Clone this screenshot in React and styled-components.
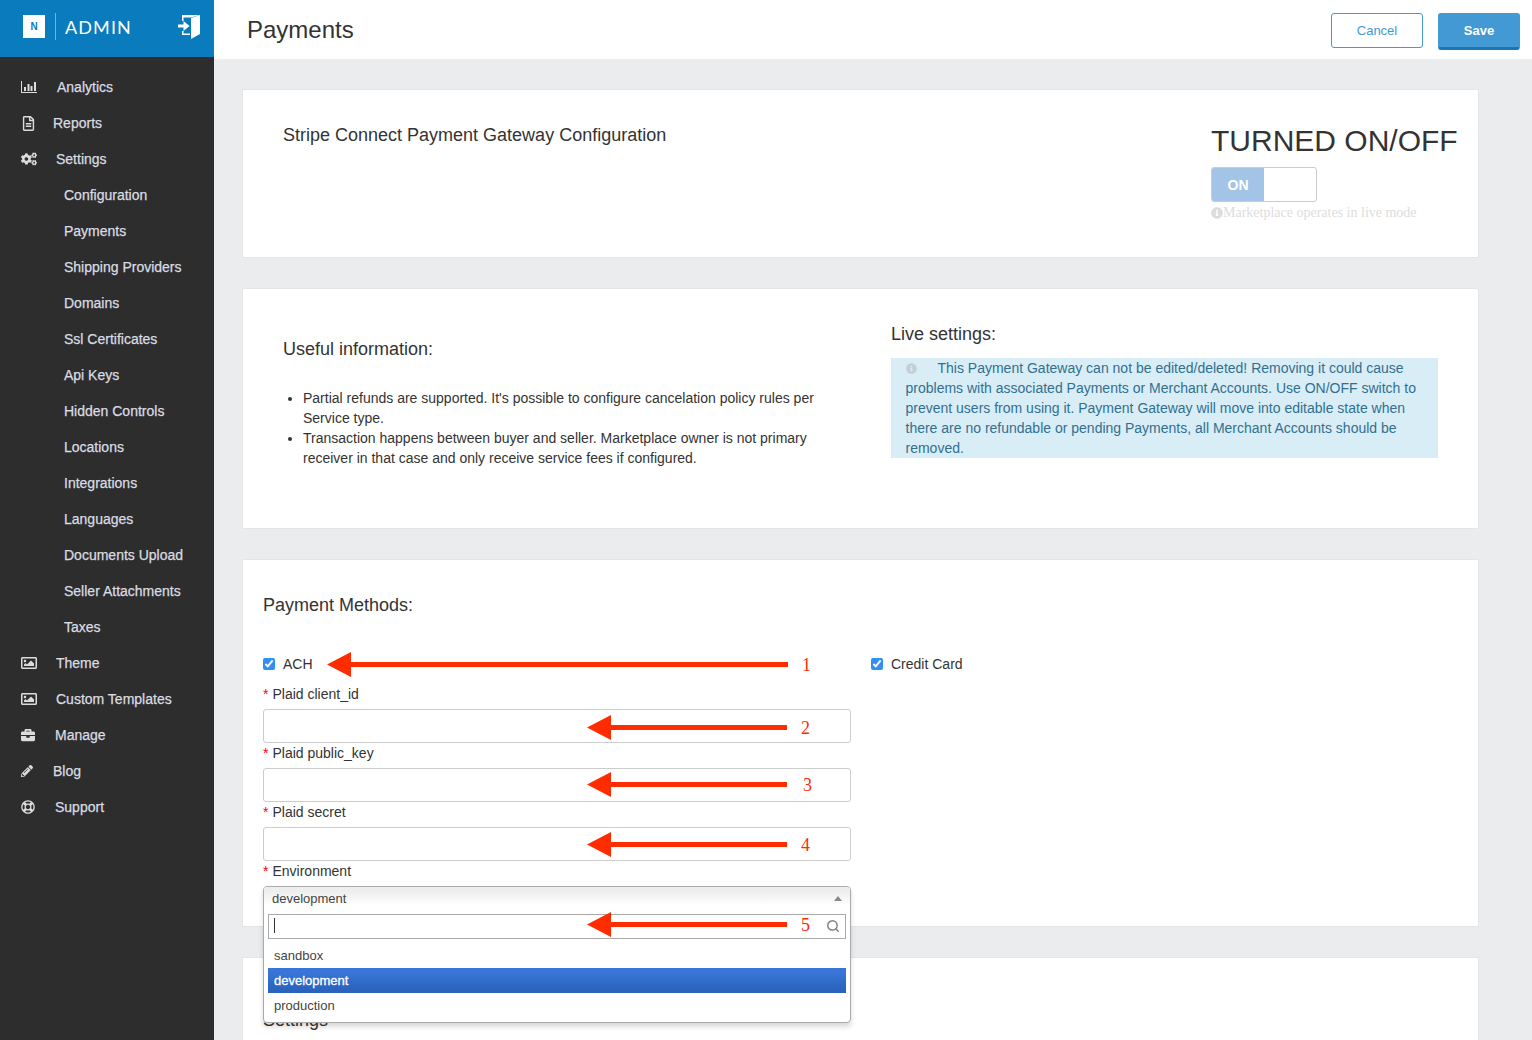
import React from "react";
import styled, { createGlobalStyle } from "styled-components";
import {
  FaRegFileAlt,
  FaCogs,
  FaRegImage,
  FaBriefcase,
  FaPencilAlt,
  FaRegLifeRing,
  FaInfoCircle,
} from "react-icons/fa";
import { Search } from "lucide-react";

const GlobalStyle = createGlobalStyle`
  html, body {
    margin: 0;
    height: 1040px;
    overflow: hidden;
    background: #ebecee;
    font-family: "Liberation Sans", Arial, sans-serif;
    color: #333;
  }
  * { box-sizing: border-box; }
`;

const Page = styled.div`
  display: flex;
  width: 1532px;
  height: 1040px;
  overflow: hidden;
`;

const Sidebar = styled.aside`
  width: 214px;
  flex: none;
  background: #2d2d2d;
`;

const Brand = styled.div`
  height: 57px;
  background: #0a7bbd;
  display: flex;
  align-items: center;
  padding: 0 14px 4px 23px;
`;

const LogoBox = styled.div`
  width: 22px;
  height: 23px;
  background: #fff;
  color: #0a7bbd;
  font-size: 10px;
  font-weight: 700;
  display: flex;
  align-items: center;
  justify-content: center;
`;

const LogoDivider = styled.div`
  width: 1px;
  height: 27px;
  background: #6fb2da;
  margin: 0 9px 0 10px;
`;

const BrandName = styled.div`
  color: #fff;
  font-family: Lato, sans-serif;
  font-size: 18px;
  letter-spacing: 1.1px;
  flex: 1;
`;

const Nav = styled.nav`
  padding-top: 12px;
`;

const NavItem = styled.div`
  height: 36px;
  display: flex;
  align-items: center;
  padding-left: ${(p) => (p.$sub ? "64px" : "21px")};
  color: #d9dce2;
  font-size: 14px;
  -webkit-text-stroke: 0.25px #d9dce2;
`;

const NavIcon = styled.span`
  width: ${(p) => p.$offset}px;
  flex: none;
  display: flex;
  align-items: center;
  color: #dcdcdc;
  -webkit-text-stroke: 0;
  font-size: 15px;
`;

const Main = styled.main`
  flex: 1;
  min-width: 0;
`;

const TopBar = styled.header`
  height: 59px;
  background: #fff;
  display: flex;
  align-items: flex-start;
  padding: 13px 12px 0 33px;
`;

const PageTitle = styled.h1`
  margin: 0;
  flex: 1;
  font-size: 24px;
  font-weight: 400;
  line-height: 34px;
  color: #333;
`;

const Button = styled.button`
  font-family: inherit;
  font-size: 13px;
  border-radius: 3px;
  width: ${(p) => (p.$primary ? "82px" : "92px")};
  height: ${(p) => (p.$primary ? "37px" : "35px")};
  margin-left: ${(p) => (p.$primary ? "15px" : "0")};
  color: ${(p) => (p.$primary ? "#fff" : "#4299d4")};
  font-weight: ${(p) => (p.$primary ? 700 : 400)};
  background: ${(p) => (p.$primary ? "#4299d4" : "#fff")};
  border: 1px solid #4299d4;
  border-bottom: ${(p) => (p.$primary ? "3px solid #1a75bb" : "1px solid #4299d4")};
  padding: 0;
`;

const Content = styled.div`
  padding: 30px 53px 0 28px;
  display: flex;
  flex-direction: column;
  gap: 30px;
`;

const Card = styled.section`
  background: #fff;
  border: 1px solid #e4e5e7;
  border-radius: 2px;
`;

const GatewayCard = styled(Card)`
  height: 169px;
  display: flex;
  justify-content: space-between;
  padding: 33px 20px 0 40px;
`;

const InfoCard = styled(Card)`
  height: 241px;
  display: grid;
  grid-template-columns: 548px 547px;
  column-gap: 60px;
  padding: 0 40px;
`;

const MethodsCard = styled(Card)`
  height: 368px;
  padding: 33px 20px 0;
`;

const SettingsCard = styled(Card)`
  height: 200px;
  padding: 50px 20px 0;
`;

const SectionTitle = styled.h3`
  margin: 0;
  font-size: 18px;
  font-weight: 400;
  line-height: 24px;
  color: #333;
`;

const SwitchColumn = styled.div`
  width: 247px;
`;

const BigHeading = styled.div`
  font-size: 30px;
  line-height: 36px;
  color: #333;
  white-space: nowrap;
`;

const Toggle = styled.div`
  width: 106px;
  height: 35px;
  margin-top: 8px;
  border: 1px solid #ccc;
  border-radius: 3px;
  overflow: hidden;
`;

const ToggleOn = styled.div`
  width: 52px;
  height: 100%;
  background: #a3c4e6;
  color: #fff;
  font-size: 14px;
  font-weight: 700;
  display: flex;
  align-items: center;
  justify-content: center;
`;

const ToggleHint = styled.div`
  display: flex;
  align-items: center;
  margin-top: 1px;
  font-family: "Liberation Serif", serif;
  font-size: 14px;
  line-height: 20px;
  color: #ddd;
  white-space: nowrap;
`;

const InfoColumn = styled.div`
  padding-top: 48px;
`;

const InfoList = styled.ul`
  margin: 27px 0 0;
  padding: 0 0 0 20px;
  font-size: 14px;
  line-height: 20px;
  color: #333;
`;

const LiveColumn = styled.div`
  padding-top: 33px;
`;

const Alert = styled.div`
  margin-top: 12px;
  height: 100px;
  padding: 0 15px 0 14.5px;
  background: #d9edf7;
  color: #31708f;
  font-size: 14px;
  line-height: 20px;
`;

const AlertIcon = styled.span`
  display: inline-flex;
  width: 32px;
  color: #c4ced3;
  font-size: 11px;
  vertical-align: -1px;
`;

const MethodGrid = styled.div`
  margin-top: 37px;
  display: grid;
  grid-template-columns: 588px 1fr;
  column-gap: 20px;
`;

const CheckRow = styled.label`
  position: relative;
  display: flex;
  align-items: center;
  height: 20px;
  font-size: 14px;
  color: #333;
`;

const CheckBox = styled.input`
  width: 12px;
  height: 12px;
  margin: 0 8px 0 0;
  accent-color: #2f8ff5;
`;

const FieldLabel = styled.div`
  margin-top: ${(p) => (p.$first ? "10px" : "0")};
  height: 25px;
  font-size: 14px;
  line-height: 20px;
  color: #333;
`;

const Required = styled.span`
  color: #f00;
  margin-right: 4px;
`;

const FieldBox = styled.div`
  position: relative;
  height: 34px;
`;

const TextInput = styled.input`
  width: 100%;
  height: 34px;
  display: block;
  border: 1px solid #ccc;
  border-radius: 3px;
  background: #fff;
  outline: none;
`;

const SelectAnchor = styled.div`
  position: relative;
  height: 26px;
`;

const SelectPanel = styled.div`
  position: absolute;
  top: 0;
  left: 0;
  right: 0;
  height: 137px;
  z-index: 2;
  background: #fff;
  border: 1px solid #aaa;
  border-radius: 4px;
  box-shadow: 0 4px 5px rgba(0, 0, 0, 0.15);
`;

const SelectHead = styled.div`
  height: 23px;
  padding-left: 8px;
  display: flex;
  align-items: center;
  justify-content: space-between;
  font-size: 13px;
  line-height: 23px;
  color: #444;
  background: linear-gradient(#eee 20%, #fff 80%);
  border-radius: 3px 3px 0 0;
`;

const Caret = styled.span`
  width: 0;
  height: 0;
  margin-right: 8px;
  border-left: 4px solid transparent;
  border-right: 4px solid transparent;
  border-bottom: 5px solid #888;
`;

const SearchBox = styled.div`
  position: relative;
  height: 25px;
  margin: 4px 4px 0;
  border: 1px solid #aaa;
  display: flex;
  align-items: center;
  justify-content: space-between;
  padding: 0 5px 2px 5px;
  color: #808080;
`;

const Cursor = styled.span`
  width: 1px;
  height: 15px;
  background: #333;
`;

const ResultList = styled.ul`
  list-style: none;
  margin: 4px 4px 0;
  padding: 0;
`;

const ResultItem = styled.li`
  height: 25px;
  padding-left: 6px;
  font-size: 13px;
  line-height: 25px;
  color: ${(p) => (p.$active ? "#fff" : "#444")};
  -webkit-text-stroke: ${(p) => (p.$active ? "0.3px #fff" : "0")};
  background: ${(p) => (p.$active ? "linear-gradient(#3875d7 20%, #2a62bc 90%)" : "transparent")};
`;

const Annotation = styled.div`
  position: absolute;
  left: ${(p) => p.$left}px;
  top: ${(p) => p.$top}px;
  width: ${(p) => p.$length}px;
  height: 25px;
`;

const AnnotationNumber = styled.span`
  position: absolute;
  left: ${(p) => p.$left}px;
  top: 1px;
  font-family: "Liberation Serif", serif;
  font-size: 18px;
  line-height: 25px;
  color: #ff2c00;
`;

const ArrowMark = ({ left, top, length, num, numLeft }) => (
  <Annotation $left={left} $top={top} $length={length}>
    <svg width={length} height="25" viewBox={`0 0 ${length} 25`}>
      <path d={`M0 12.5 L24 0 V10 H${length} V15 H24 V25 Z`} fill="#ff2c00" />
    </svg>
    <AnnotationNumber $left={numLeft}>{num}</AnnotationNumber>
  </Annotation>
);

const AnalyticsIcon = () => (
  <svg width="16" height="12" viewBox="0 0 16 12" fill="currentColor">
    <path d="M0 0h1v11h15v1H0z" />
    <path d="M3 6h2v4H3zM6.5 3h2v7h-2zM9.5 5h2v5h-2zM13 1h2v9h-2z" />
  </svg>
);

const DoorIcon = () => (
  <svg width="22" height="24" viewBox="0 0 22 24" fill="#fff">
    <path d="M4 0h18l-9 2.5H5.5V6H4zM4 16h1.5v2.5H12V20H4z" />
    <path d="M13 3l9-3v19l-9 5z" />
    <path d="M0 9.5h5.5V6l6 5-6 5v-3.5H0z" />
  </svg>
);

const navItems = [
  { label: "Analytics", icon: <AnalyticsIcon />, offset: 36 },
  { label: "Reports", icon: <FaRegFileAlt size={15} />, offset: 32 },
  { label: "Settings", icon: <FaCogs size={16} />, offset: 35 },
  { label: "Configuration", sub: true },
  { label: "Payments", sub: true },
  { label: "Shipping Providers", sub: true },
  { label: "Domains", sub: true },
  { label: "Ssl Certificates", sub: true },
  { label: "Api Keys", sub: true },
  { label: "Hidden Controls", sub: true },
  { label: "Locations", sub: true },
  { label: "Integrations", sub: true },
  { label: "Languages", sub: true },
  { label: "Documents Upload", sub: true },
  { label: "Seller Attachments", sub: true },
  { label: "Taxes", sub: true },
  { label: "Theme", icon: <FaRegImage size={16} />, offset: 35 },
  { label: "Custom Templates", icon: <FaRegImage size={16} />, offset: 35 },
  { label: "Manage", icon: <FaBriefcase size={14} />, offset: 34 },
  { label: "Blog", icon: <FaPencilAlt size={12} />, offset: 32 },
  { label: "Support", icon: <FaRegLifeRing size={14} />, offset: 34 },
];

const fields = [
  { label: "Plaid client_id", first: true, arrowTop: 6, num: "2", numLeft: 214 },
  { label: "Plaid public_key", arrowTop: 4, num: "3", numLeft: 216 },
  { label: "Plaid secret", arrowTop: 5, num: "4", numLeft: 214 },
];

const App = () => {
  return (
    <Page>
      <GlobalStyle />
      <Sidebar>
        <Brand>
          <LogoBox>N</LogoBox>
          <LogoDivider />
          <BrandName>ADMIN</BrandName>
          <DoorIcon />
        </Brand>
        <Nav>
          {navItems.map((item) => (
            <NavItem key={item.label} $sub={item.sub}>
              {item.icon && <NavIcon $offset={item.offset}>{item.icon}</NavIcon>}
              {item.label}
            </NavItem>
          ))}
        </Nav>
      </Sidebar>
      <Main>
        <TopBar>
          <PageTitle>Payments</PageTitle>
          <Button>Cancel</Button>
          <Button $primary>Save</Button>
        </TopBar>
        <Content>
          <GatewayCard>
            <SectionTitle>Stripe Connect Payment Gateway Configuration</SectionTitle>
            <SwitchColumn>
              <BigHeading>TURNED ON/OFF</BigHeading>
              <Toggle>
                <ToggleOn>ON</ToggleOn>
              </Toggle>
              <ToggleHint>
                <FaInfoCircle size={12} />
                Marketplace operates in live mode
              </ToggleHint>
            </SwitchColumn>
          </GatewayCard>
          <InfoCard>
            <InfoColumn>
              <SectionTitle>Useful information:</SectionTitle>
              <InfoList>
                <li>
                  Partial refunds are supported. It's possible to configure cancelation policy rules per
                  Service type.
                </li>
                <li>
                  Transaction happens between buyer and seller. Marketplace owner is not primary
                  receiver in that case and only receive service fees if configured.
                </li>
              </InfoList>
            </InfoColumn>
            <LiveColumn>
              <SectionTitle>Live settings:</SectionTitle>
              <Alert>
                <AlertIcon>
                  <FaInfoCircle />
                </AlertIcon>
                This Payment Gateway can not be edited/deleted! Removing it could cause problems with
                associated Payments or Merchant Accounts. Use ON/OFF switch to prevent users from using
                it. Payment Gateway will move into editable state when there are no refundable or pending
                Payments, all Merchant Accounts should be removed.
              </Alert>
            </LiveColumn>
          </InfoCard>
          <MethodsCard>
            <SectionTitle>Payment Methods:</SectionTitle>
            <MethodGrid>
              <div>
                <CheckRow>
                  <CheckBox type="checkbox" checked readOnly />
                  ACH
                  <ArrowMark left={64} top={-2} length={461} num="1" numLeft={475} />
                </CheckRow>
                {fields.map((field) => (
                  <React.Fragment key={field.label}>
                    <FieldLabel $first={field.first}>
                      <Required>*</Required>
                      {field.label}
                    </FieldLabel>
                    <FieldBox>
                      <TextInput />
                      <ArrowMark
                        left={324}
                        top={field.arrowTop}
                        length={200}
                        num={field.num}
                        numLeft={field.numLeft}
                      />
                    </FieldBox>
                  </React.Fragment>
                ))}
                <FieldLabel>
                  <Required>*</Required>
                  Environment
                </FieldLabel>
                <SelectAnchor>
                  <SelectPanel>
                    <SelectHead>
                      development
                      <Caret />
                    </SelectHead>
                    <SearchBox>
                      <Cursor />
                      <Search size={14} strokeWidth={2.5} />
                      <ArrowMark left={318} top={-3} length={200} num="5" numLeft={214} />
                    </SearchBox>
                    <ResultList>
                      <ResultItem>sandbox</ResultItem>
                      <ResultItem $active>development</ResultItem>
                      <ResultItem>production</ResultItem>
                    </ResultList>
                  </SelectPanel>
                </SelectAnchor>
              </div>
              <div>
                <CheckRow>
                  <CheckBox type="checkbox" checked readOnly />
                  Credit Card
                </CheckRow>
              </div>
            </MethodGrid>
          </MethodsCard>
          <SettingsCard>
            <SectionTitle>Settings</SectionTitle>
          </SettingsCard>
        </Content>
      </Main>
    </Page>
  );
};

export default App;
